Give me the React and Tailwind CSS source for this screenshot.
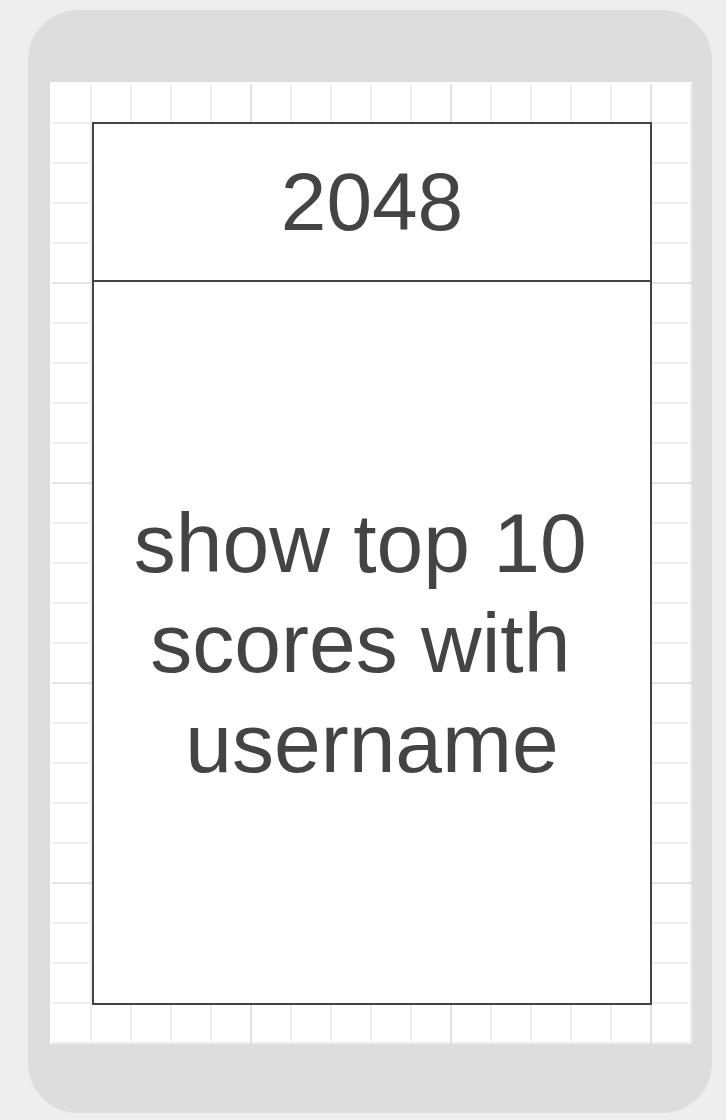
export default function App() {
    const lines = ["show top 10\u00a0", "scores with\u00a0", "username"]

    return (
        <div className="min-h-[1120px] bg-[#eeeeee] pt-[10px] pl-[28px] font-['Liberation_Sans',Arial,sans-serif] text-[#444444]">
            {/* phone frame */}
            <div className="w-[684px] h-[1103px] rounded-[50px] bg-[#dddddd] pt-[72px] pl-[22px]">
                {/* screen */}
                <div className="w-[642px] h-[962px] bg-white pt-[2px] pl-[2px]">
                    <div className="w-[640px] h-[960px] pt-[38px] pl-[40px] [background-image:linear-gradient(to_right,transparent_198px,#e3e3e3_198px),linear-gradient(to_bottom,transparent_198px,#e3e3e3_198px),linear-gradient(to_right,transparent_38px,#eeeeee_38px),linear-gradient(to_bottom,transparent_38px,#eeeeee_38px)] [background-size:200px_200px,200px_200px,40px_40px,40px_40px]">
                        <div className="w-[560px] h-[883px] border-2 border-[#444444] bg-white flex flex-col">
                            <div className="h-[156px] flex items-center justify-center text-[82px] leading-[100px]">
                                2048
                            </div>
                            <div className="h-[2px] bg-[#444444]" />
                            <div className="flex-1 flex flex-col items-center justify-center text-[84px] leading-[100px]">
                                {lines.map((line) => (
                                    <div key={line} className="whitespace-pre">{line}</div>
                                ))}
                            </div>
                        </div>
                    </div>
                </div>
            </div>
        </div>
    )
}
